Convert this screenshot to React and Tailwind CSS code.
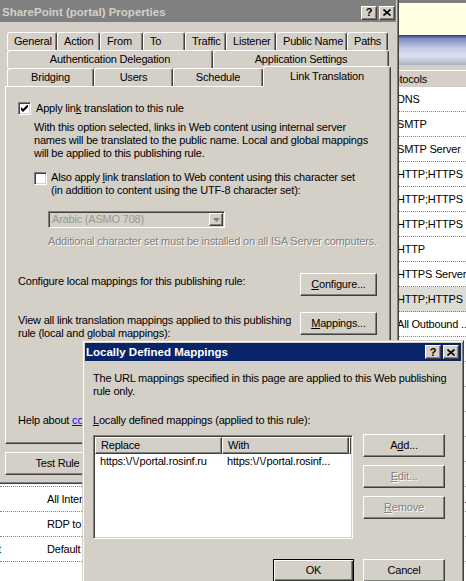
import React from 'react';

const raised =
  'border border-t-white border-l-white border-r-[#404040] border-b-[#404040] shadow-[inset_-1px_-1px_0_#808080]';
const sunken =
  'border border-t-[#808080] border-l-[#808080] border-r-white border-b-white shadow-[inset_1px_1px_0_#404040,inset_-1px_-1px_0_#d4d0c8]';
const disabledText = 'text-[#808080] [text-shadow:1px_1px_0_#ffffff]';

function Btn({ children, className = '', disabled, isDefault }) {
  const frame = isDefault
    ? 'border border-black shadow-[inset_1px_1px_0_#ffffff,inset_-1px_-1px_0_#404040,inset_-2px_-2px_0_#808080]'
    : raised;
  return (
    <div
      className={`${frame} bg-[#d4d0c8] h-[23px] shrink-0 flex items-center justify-center whitespace-nowrap ${
        disabled ? disabledText : 'text-black'
      } ${className}`}
    >
      <span>{children}</span>
    </div>
  );
}

function CapBtn({ children }) {
  return (
    <div className={`w-[16px] h-[14px] bg-[#d4d0c8] ${raised} flex items-center justify-center`}>
      {children}
    </div>
  );
}

function CaptionButtons() {
  return (
    <div className="flex gap-[2px]">
      <CapBtn>
        <span className="text-[11px] font-bold leading-none tracking-normal text-black">?</span>
      </CapBtn>
      <CapBtn>
        <svg width="8" height="7" viewBox="0 0 8 7">
          <path d="M0.5 0.5 L7.5 6.5 M7.5 0.5 L0.5 6.5" stroke="#000" strokeWidth="1.6" />
        </svg>
      </CapBtn>
    </div>
  );
}

function Check({ checked }) {
  return (
    <div className={`w-[13px] h-[13px] shrink-0 bg-white ${sunken} p-px flex items-center justify-center`}>
      {checked && (
        <svg width="7" height="7" viewBox="0 0 7 7">
          <polygon points="0,2 2,4 7,-1 7,2 2,7 0,5" fill="#000" />
        </svg>
      )}
    </div>
  );
}

function Tab({ label, w, center }) {
  return (
    <div
      className={`${w} h-[18px] shrink-0 flex items-center ${
        center ? 'justify-center' : 'pl-[6px]'
      } border-t border-l border-r border-t-white border-l-white border-r-[#404040] rounded-t-[3px] shadow-[inset_-1px_0_0_#808080] bg-[#d4d0c8] whitespace-nowrap`}
    >
      {label}
    </div>
  );
}

// url text with a bit of room between the slashes
function Url({ children }) {
  return <span className="tracking-[0.4px]">{children}</span>;
}

const row1 = [
  ['General', 'w-[50px]'],
  ['Action', 'w-[43px]'],
  ['From', 'w-[43px]'],
  ['To', 'w-[42px]'],
  ['Traffic', 'w-[41px]'],
  ['Listener', 'w-[50px]'],
  ['Public Name', 'w-[71px]'],
  ['Paths', 'w-[41px]'],
];

const listRows = [
  { c: 'DNS' },
  { c: 'SMTP' },
  { c: 'SMTP Server' },
  { c: 'HTTP;HTTPS' },
  { c: 'HTTP;HTTPS' },
  { c: 'HTTP;HTTPS' },
  { c: 'HTTP' },
  { c: 'HTTPS Server' },
  { c: 'HTTP;HTTPS', sel: true },
  { c: 'All Outbound ...' },
  { c: 'HTTP' },
  { c: 'HTTP;HTTPS' },
  { c: 'RDP' },
  { c: 'HTTPS' },
  { c: 'DNS' },
  { c: 'HTTP' },
  { b: 'All Internal Clients', c: 'All Outbound ...' },
  { b: 'RDP to Server', c: 'RDP' },
  { a: 't', b: 'Default rule', c: 'All Traffic' },
  { c: '' },
];

function Background() {
  return (
    <div className="flex flex-col">
      <div className="h-[3px] bg-[#808080]" />
      <div className="h-[32px] bg-[#ffffe1]" />
      <div className="h-[30px] bg-[linear-gradient(to_bottom,#2c3c78_0%,#7d8dc0_12%,#c4cce8_45%,#dde1f2_70%,#aab2c6_100%)]" />
      <div className="h-[5px] bg-[#d4d0c8]" />
      <div className="h-[17px] bg-[#d4d0c8] border-t border-white flex items-center">
        <span className="pl-[383px] whitespace-nowrap">Protocols</span>
      </div>
      {listRows.map((r, i) => (
        <div
          key={i}
          className={`flex h-[25px] items-center border-b border-dotted border-[#808080] ${
            r.sel ? 'bg-[#dedcd6]' : 'bg-white'
          }`}
        >
          <div className="w-[47px] shrink-0 overflow-hidden whitespace-nowrap">
            {r.a && <span className="-ml-[2px]">{r.a}</span>}
          </div>
          <div className="w-[350px] shrink-0 overflow-hidden whitespace-nowrap">{r.b}</div>
          <div className="flex-1 overflow-hidden whitespace-nowrap">{r.c}</div>
        </div>
      ))}
    </div>
  );
}

function PropertiesDialog() {
  return (
    <div className="absolute left-0 top-0 w-[399px] h-[484px] bg-[#d4d0c8] border-r border-b border-[#404040] shadow-[inset_-1px_-1px_0_#808080] pr-[2px] pb-[2px] flex flex-col">
      <div className="h-[22px] pt-[3px] bg-[#808080] flex items-center justify-between pl-[2px] pr-[1px]">
        <span className="text-[11.5px] font-bold tracking-normal text-[#d4d0c8] whitespace-nowrap">
          SharePoint (portal) Properties
        </span>
        <CaptionButtons />
      </div>

      <div className="mt-[10px] pl-[7px] flex flex-col">
        <div className="flex">
          {row1.map(([l, w]) => (
            <Tab key={l} label={l} w={w} />
          ))}
        </div>
        <div className="flex">
          <Tab label="Authentication Delegation" w="w-[206px]" center />
          <Tab label="Application Settings" w="w-[176px]" center />
        </div>
        <div className="flex items-end h-[18px]">
          <Tab label="Bridging" w="w-[87px]" center />
          <Tab label="Users" w="w-[79px]" center />
          <Tab label="Schedule" w="w-[90px]" center />
          <div className="w-[128px] h-[21px] -mb-px relative z-10 shrink-0 flex justify-center pt-[3px] border-t border-l border-r border-t-white border-l-white border-r-[#404040] rounded-t-[3px] shadow-[inset_-1px_0_0_#808080] bg-[#d4d0c8] whitespace-nowrap">
            Link Translation
          </div>
        </div>
      </div>

      <div className="ml-[5px] w-[386px] h-[358px] shrink-0 border border-t-white border-l-white border-r-[#404040] border-b-[#404040] shadow-[inset_-1px_-1px_0_#808080] flex flex-col">
        <div className="mt-[15px] ml-[12px] flex items-center gap-[5px] h-[13px]">
          <Check checked />
          <span className="whitespace-nowrap">
            Apply lin<u>k</u> translation to this rule
          </span>
        </div>
        <p className="mt-[6px] ml-[28px] whitespace-nowrap">
          With this option selected, links in Web content using internal server
          <br />
          names will be translated to the public name. Local and global mappings
          <br />
          will be applied to this publishing rule.
        </p>
        <div className="mt-[11px] ml-[28px] flex items-start gap-[4px]">
          <div className="mt-px">
            <Check />
          </div>
          <span className="whitespace-nowrap">
            Also apply <u>l</u>ink translation to Web content using this character set
            <br />
            (in addition to content using the UTF-8 character set):
          </span>
        </div>
        <div className={`mt-[14px] ml-[42px] w-[177px] h-[17px] bg-[#d4d0c8] ${sunken} p-px flex items-center`}>
          <span className="flex-1 pl-[2px] text-[#9a9892] whitespace-nowrap">Arabic (ASMO 708)</span>
          <div className={`w-[14px] h-full ${raised} bg-[#d4d0c8] flex items-center justify-center`}>
            <svg width="7" height="4" viewBox="0 0 7 4">
              <polygon points="0,0 7,0 3.5,4" fill="#808080" />
            </svg>
          </div>
        </div>
        <p className={`mt-[7px] ml-[42px] whitespace-nowrap ${disabledText}`}>
          Additional character set must be installed on all ISA Server computers.
        </p>

        <div className="mt-[25px] ml-[12px] flex items-start">
          <span className="w-[282px] mt-[2px] whitespace-nowrap">
            Configure local mappings for this publishing rule:
          </span>
          <Btn className="w-[77px]">
            <u>C</u>onfigure...
          </Btn>
        </div>
        <div className="mt-[16px] ml-[12px] flex items-start">
          <span className="w-[282px] mt-[2px] whitespace-nowrap">
            View all link translation mappings applied to this publishing
            <br />
            rule (local and global mappings):
          </span>
          <Btn className="w-[77px]">
            <u>M</u>appings...
          </Btn>
        </div>
        <p className="mt-[74px] ml-[12px] whitespace-nowrap">
          Help about{' '}
          <span className="text-[#0000ff] underline">configuring link translation</span>
        </p>
      </div>

      <div className="mt-[8px] ml-[5px]">
        <Btn className="w-[105px]">Test Rule</Btn>
      </div>
    </div>
  );
}

function MappingsDialog() {
  return (
    <div className="absolute left-[82px] top-[340px] w-[382px] h-[260px] bg-[#d4d0c8] border border-t-[#d4d0c8] border-l-[#d4d0c8] border-r-[#404040] border-b-[#404040] shadow-[inset_1px_1px_0_#ffffff,inset_-1px_-1px_0_#808080] p-[2px] flex flex-col">
      <div className="h-[18px] bg-[#0a246a] flex items-center justify-between pl-[1px] pr-[2px]">
        <span className="text-[11.5px] font-bold tracking-normal text-white whitespace-nowrap">
          Locally Defined Mappings
        </span>
        <CaptionButtons />
      </div>

      <div className="pl-[8px] flex flex-col">
        <p className="mt-[11px] whitespace-nowrap">
          The URL mappings specified in this page are applied to this Web publishing
          <br />
          rule only.
        </p>
        <p className="mt-[16px] whitespace-nowrap">
          <u>L</u>ocally defined mappings (applied to this rule):
        </p>

        <div className="mt-[8px] flex items-start">
          <div className={`w-[260px] h-[104px] bg-white ${sunken} p-px flex flex-col`}>
            <div className="flex h-[17px]">
              <div className={`w-[127px] ${raised} bg-[#d4d0c8] flex items-center pl-[5px]`}>Replace</div>
              <div className={`w-[127px] ${raised} bg-[#d4d0c8] flex items-center pl-[5px]`}>With</div>
              <div className={`flex-1 ${raised} bg-[#d4d0c8]`} />
            </div>
            <div className="flex h-[14px] items-center">
              <div className="w-[127px] pl-[5px] whitespace-nowrap overflow-hidden">
                https:<Url>{'\\/\\/'}</Url>portal.rosinf.ru
              </div>
              <div className="w-[127px] pl-[5px] whitespace-nowrap overflow-hidden">
                https:<Url>{'\\/\\/'}</Url>portal.rosinf...
              </div>
            </div>
          </div>
          <div className="ml-[10px] -mt-px flex flex-col gap-[8px]">
            <Btn className="w-[82px]">
              A<u>d</u>d...
            </Btn>
            <Btn className="w-[82px]" disabled>
              <u>E</u>dit...
            </Btn>
            <Btn className="w-[82px]" disabled>
              <u>R</u>emove
            </Btn>
          </div>
        </div>

        <div className="mt-[20px] ml-[180px] flex gap-[9px]">
          <Btn className="w-[81px]" isDefault>
            OK
          </Btn>
          <Btn className="w-[82px]">Cancel</Btn>
        </div>
      </div>
    </div>
  );
}

export default function App() {
  return (
    <div className="relative w-[466px] h-[581px] overflow-hidden bg-white font-['Liberation_Sans',Arial,sans-serif] text-[11px] leading-[13px] tracking-[-0.2px] text-black">
      <Background />
      <PropertiesDialog />
      <MappingsDialog />
    </div>
  );
}
